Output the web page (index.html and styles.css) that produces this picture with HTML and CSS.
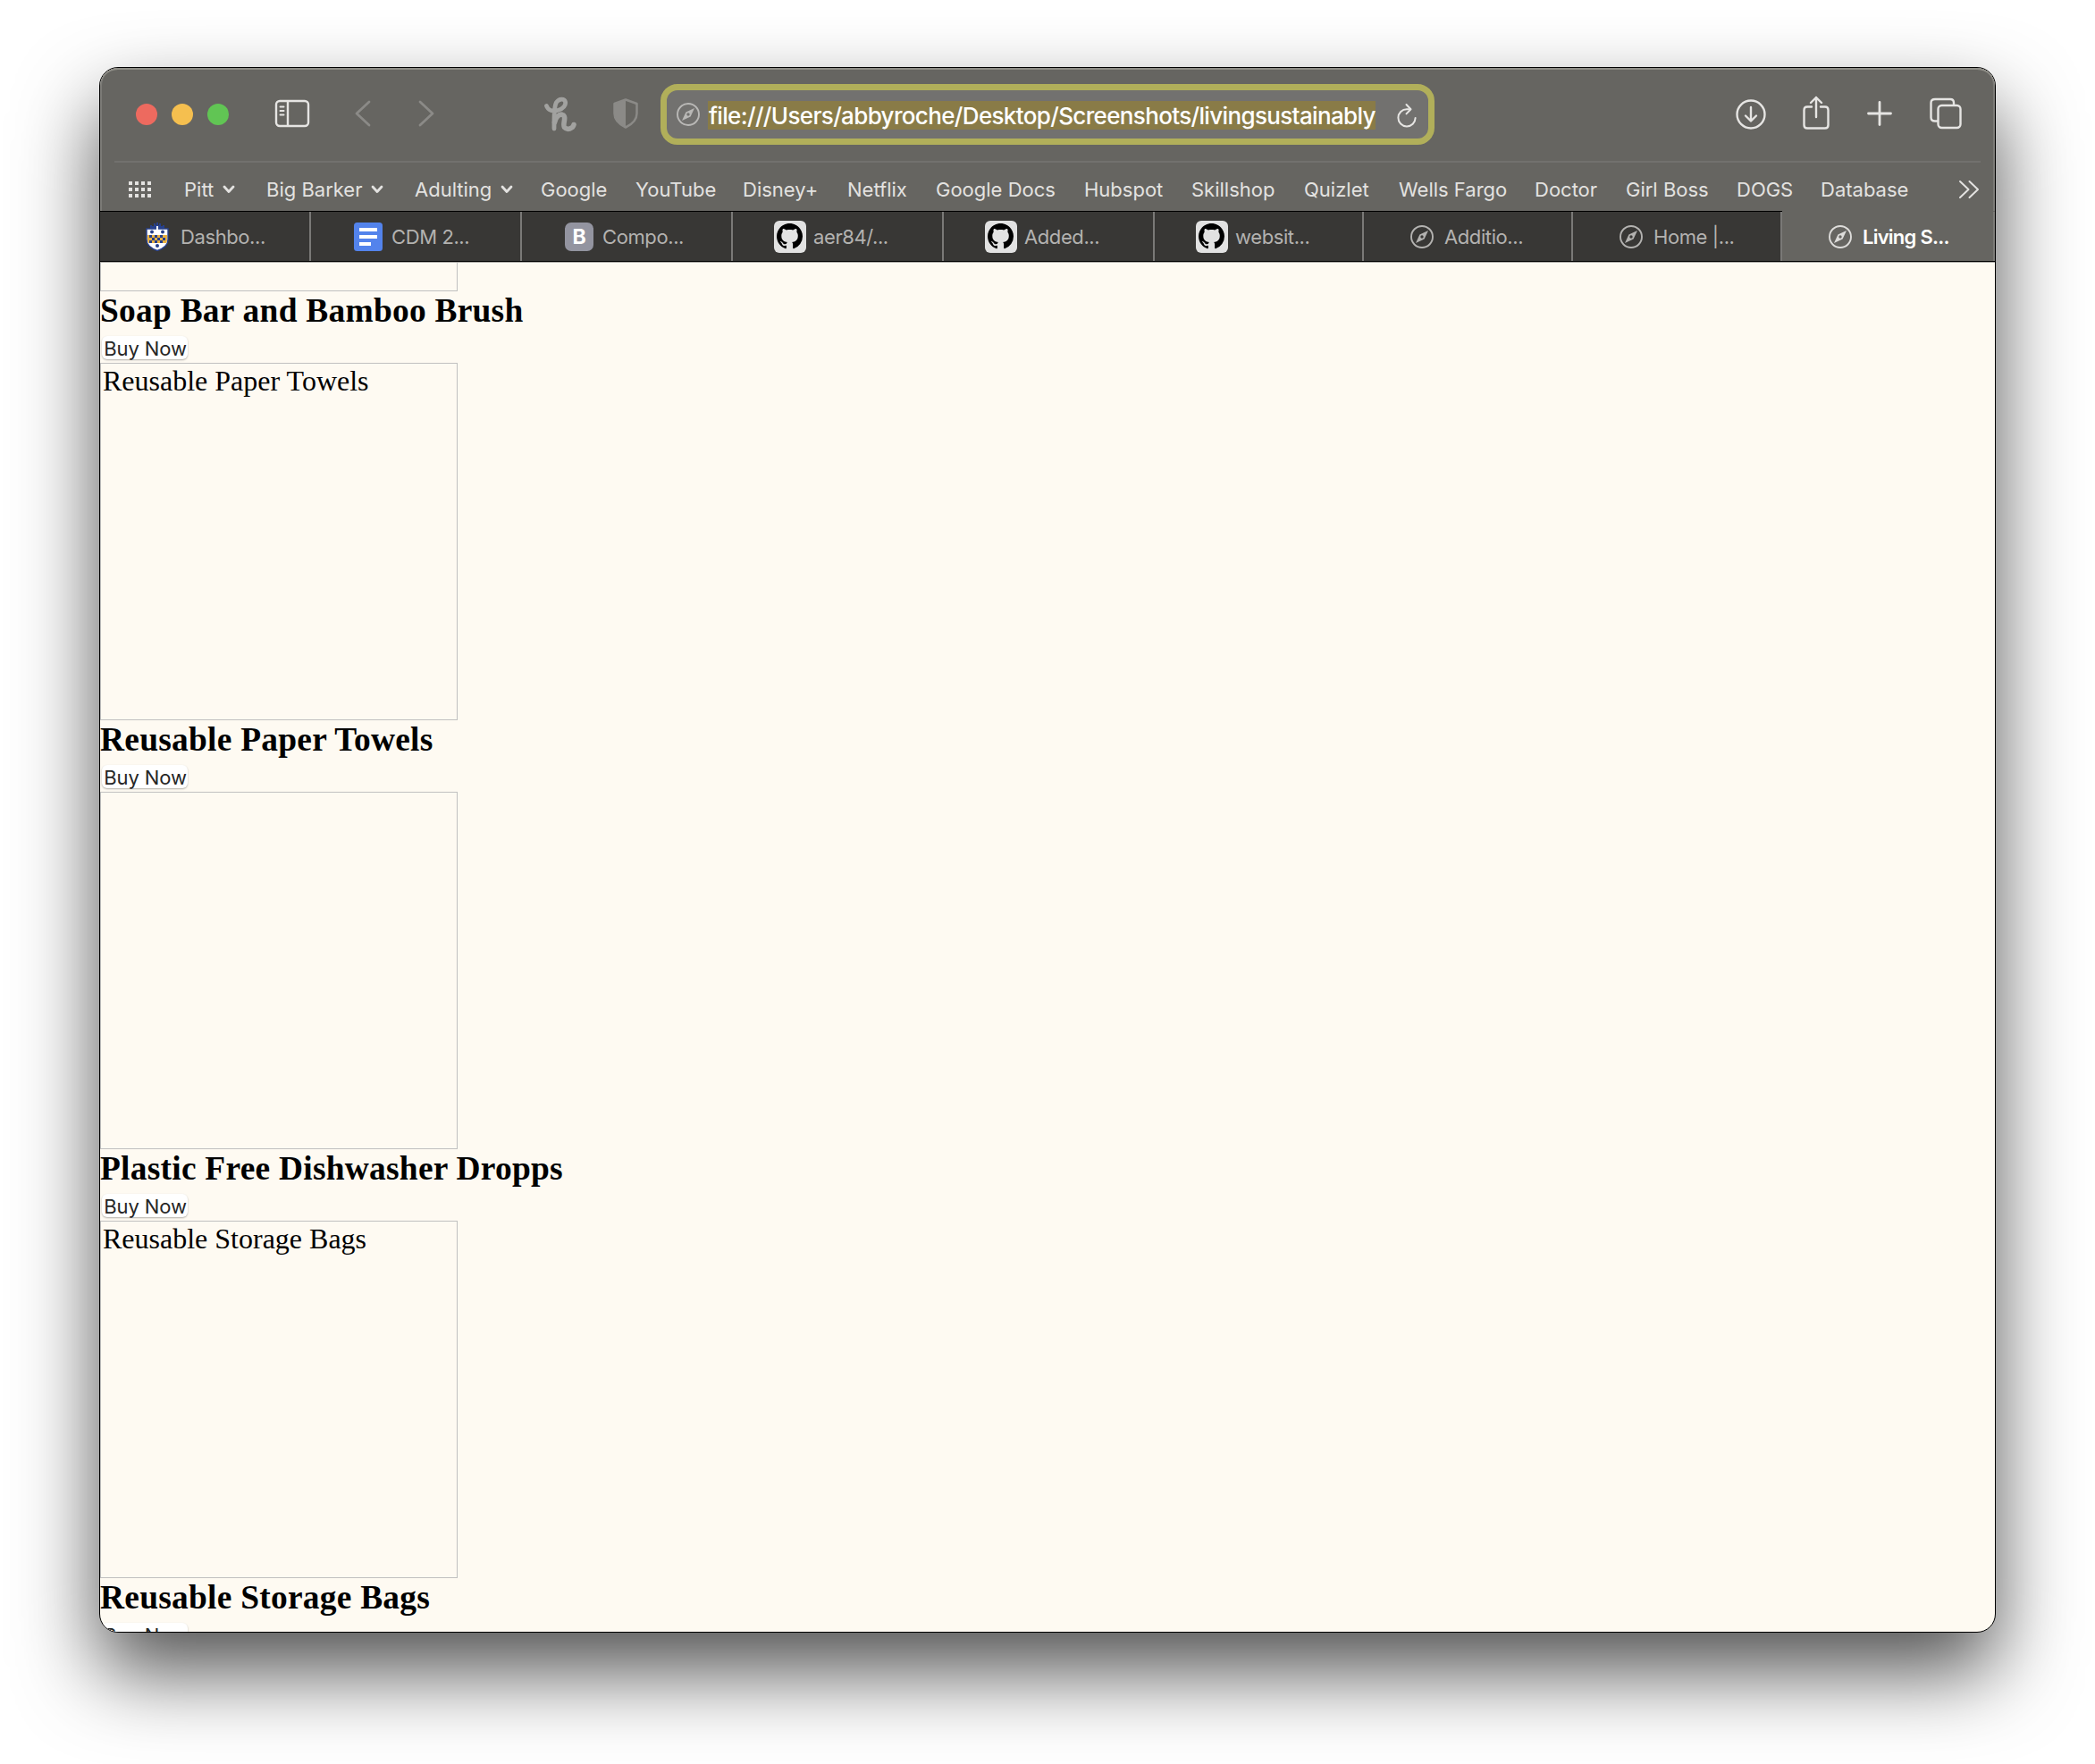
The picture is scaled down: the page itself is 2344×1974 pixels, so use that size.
FILE: index.html
```html
<!DOCTYPE html>
<html lang="en">
<head>
<meta charset="utf-8">
<title>Living Sustainably</title>
<link rel="stylesheet" href="styles.css">
</head>
<body>
<svg width="0" height="0" class="defs">
  <symbol id="compass" viewBox="0 0 26 26"><circle cx="13" cy="13" r="12" fill="none" stroke="currentColor" stroke-width="1.9"/><path fill="currentColor" fill-rule="evenodd" d="M20 6 15.6 15.4 6 20 10.4 10.6ZM13 11.3a1.7 1.7 0 1 0 0 3.4 1.7 1.7 0 0 0 0-3.4Z"/></symbol>
  <symbol id="octocat" viewBox="0 0 16 16"><path d="M8 0C3.58 0 0 3.58 0 8c0 3.54 2.29 6.53 5.47 7.59.4.07.55-.17.55-.38 0-.19-.01-.82-.01-1.49-2.01.37-2.53-.49-2.69-.94-.09-.23-.48-.94-.82-1.13-.28-.15-.68-.52-.01-.53.63-.01 1.08.58 1.23.82.72 1.21 1.87.87 2.33.66.07-.52.28-.87.51-1.07-1.78-.2-3.64-.89-3.64-3.95 0-.87.31-1.59.82-2.15-.08-.2-.36-1.02.08-2.12 0 0 .67-.21 2.2.82.64-.18 1.32-.27 2-.27s1.36.09 2 .27c1.53-1.04 2.2-.82 2.2-.82.44 1.1.16 1.92.08 2.12.51.56.82 1.27.82 2.15 0 3.07-1.87 3.75-3.65 3.95.29.25.54.73.54 1.48 0 1.07-.01 1.93-.01 2.2 0 .21.15.46.55.38A8.01 8.01 0 0 0 16 8c0-4.42-3.58-8-8-8Z"/></symbol>
  <symbol id="down" viewBox="0 0 14 10"><path d="M2 2l5 5.5L12 2" fill="none" stroke="currentColor" stroke-width="2.8" stroke-linecap="round" stroke-linejoin="round"/></symbol>
</svg>
<div class="window">
  <header class="chrome">
    <div class="toolbar">
      <span class="light red"></span><span class="light yellow"></span><span class="light green"></span>
      <svg class="i-side" width="40" height="32" viewBox="0 0 40 32" fill="none" stroke="#e6e5e3" stroke-width="2.4"><rect x="2" y="2" width="36" height="28" rx="4"/><path d="M15 2v28"/><path d="M6.5 8.5h4M6.5 13h4M6.5 17.5h4" stroke-width="2" stroke-linecap="round"/></svg>
      <svg class="i-back" width="18" height="30" viewBox="0 0 18 30" fill="none" stroke="#8b8a87" stroke-width="2.8" stroke-linecap="round" stroke-linejoin="round"><path d="M16 2 2 15l14 13"/></svg>
      <svg class="i-fwd" width="18" height="30" viewBox="0 0 18 30" fill="none" stroke="#8b8a87" stroke-width="2.8" stroke-linecap="round" stroke-linejoin="round"><path d="m2 2 14 13L2 28"/></svg>
      <svg class="i-honey" width="36" height="40" viewBox="0 0 36 40" fill="none" stroke="#a2a2a0" stroke-linecap="round" stroke-linejoin="round"><path d="M2.500 10.500C4 15 9 17 15 15.500C21 14 24.500 9.500 23.500 5.800C22.500 2 16.500 2 13.500 6.500C10.500 11.500 11 25 11 36" stroke-width="4.800"/><path d="M11.500 29C12.500 23 17 19 20.500 20.500C25.500 22.500 20 31 22.500 34.500C25.500 38 32 36 33 31.500" stroke-width="5.600"/></svg>
      <svg class="i-shield" width="28" height="34" viewBox="0 0 28 34"><path d="M14 1.500 26.500 6v11c0 7-5 12-12.500 15.500C6.500 29 1.500 24 1.500 17V6Z" fill="none" stroke="#8b8a87" stroke-width="2.500" stroke-linejoin="round"/><path d="M14 1.500V32.500C6.500 29 1.500 24 1.500 17V6Z" fill="#8b8a87"/></svg>
      <div class="address">
        <svg class="i-site" width="26" height="26"><use href="#compass"/></svg>
        <div class="url"><span>file:///Users/abbyroche/Desktop/Screenshots/livingsustainably</span></div>
        <svg class="i-reload" width="24" height="28" viewBox="0 0 24 28" fill="none" stroke="#e6e5e3" stroke-width="2" stroke-linecap="round" stroke-linejoin="round"><path d="M16 7.200H12A9.600 9.600 0 1 0 21.600 17"/><path d="M11.500 2 16.500 7.200 11.500 12.400"/></svg>
      </div>
      <svg class="i-dl" width="34" height="34" viewBox="0 0 34 34" fill="none" stroke="#e6e5e3" stroke-width="2.400" stroke-linecap="round" stroke-linejoin="round"><circle cx="17" cy="17" r="15.500"/><path d="M17 9v15M11 18.500l6 6 6-6"/></svg>
      <svg class="i-share" width="30" height="38" viewBox="0 0 30 38" fill="none" stroke="#e6e5e3" stroke-width="2.400" stroke-linecap="round" stroke-linejoin="round"><path d="M10 12.500H5Q1.500 12.500 1.500 16V33Q1.500 36.500 5 36.500H25Q28.500 36.500 28.500 33V16Q28.500 12.500 25 12.500H20M15 24V2M9 8l6-6 6 6"/></svg>
      <svg class="i-plus" width="28" height="28" viewBox="0 0 28 28" fill="none" stroke="#e6e5e3" stroke-width="2.800" stroke-linecap="round"><path d="M14 1.500v25M1.500 14h25"/></svg>
      <svg class="i-tabs" width="36" height="36" viewBox="0 0 36 36" fill="none" stroke="#e6e5e3" stroke-width="2.400" stroke-linejoin="round"><rect x="9.500" y="9" width="25" height="25" rx="4"/><path d="M9.500 26.500H6Q1.500 26.500 1.500 22.500V6Q1.500 2 6 2H23Q27 2 27 6V9"/></svg>
    </div>
    <nav class="bookmarks">
      <svg class="i-apps" width="26" height="18" viewBox="0 0 26 18" fill="#e3e2e0"><path d="M0 0h4v4H0zM7 0h4v4H7zM14 0h4v4h-4zM21 0h4v4h-4zM0 7h4v4H0zM7 7h4v4H7zM14 7h4v4h-4zM21 7h4v4h-4zM0 14h4v4H0zM7 14h4v4H7zM14 14h4v4h-4zM21 14h4v4h-4z"/></svg>
      <span class="menu">Pitt<svg width="14" height="10"><use href="#down"/></svg></span>
      <span class="menu">Big Barker<svg width="14" height="10"><use href="#down"/></svg></span>
      <span class="menu">Adulting<svg width="14" height="10"><use href="#down"/></svg></span>
      <span>Google</span><span>YouTube</span><span>Disney+</span><span>Netflix</span><span>Google Docs</span><span>Hubspot</span><span>Skillshop</span><span>Quizlet</span><span>Wells Fargo</span><span>Doctor</span><span>Girl Boss</span><span>DOGS</span><span>Database</span>
      <svg width="24" height="22" viewBox="0 0 24 22" fill="none" stroke="#e3e2e0" stroke-width="2" stroke-linecap="round" stroke-linejoin="round"><path d="m2 2 9.500 9L2 20M12.500 2l9.500 9-9.500 9"/></svg>
    </nav>
    <div class="tabs">
      <div class="tab t-pitt"><svg width="26" height="32" viewBox="0 0 26 32"><path d="M5 3h2v1h2V1h2v2h1V0h2v3h1V1h2v3h2V3h2v4H5Z" fill="#27408b"/><path d="M1 7h24v12c0 6-5 10-12 12.500C6 29 1 25 1 19Z" fill="#fff" stroke="#27408b" stroke-width="1.400"/><path d="M12 4h2v5h-2z" fill="#fff"/><path d="M2 14h22v6q-.3 1.500-1 3H3q-.8-1.500-1-3Z" fill="#e8b040"/><path d="M4 14h3v3H4zm6 0h3v3h-3zm6 0h3v3h-3zM7 17h3v3H7zm6 0h3v3h-3zm6 0h3v3h-3zM4 20h3v3H4zm6 0h3v3h-3zm6 0h3v3h-3z" fill="#27408b"/><circle cx="7" cy="10.500" r="2" fill="#27408b"/><circle cx="19" cy="10.500" r="2" fill="#27408b"/><circle cx="13" cy="26" r="2" fill="#27408b"/></svg><span>Dashbo...</span></div>
      <div class="tab t-doc"><svg width="32" height="32" viewBox="0 0 32 32"><rect width="32" height="32" rx="3.500" fill="#5383ec"/><path d="M6 6h20v4H6zM6 14h20v4H6zM6 22h13v4H6z" fill="#fff"/></svg><span>CDM 2...</span></div>
      <div class="tab t-boot"><b class="letter">B</b><span>Compo...</span></div>
      <div class="tab t-git"><i class="git"><svg width="29" height="29"><use href="#octocat"/></svg></i><span>aer84/...</span></div>
      <div class="tab t-git"><i class="git"><svg width="29" height="29"><use href="#octocat"/></svg></i><span>Added...</span></div>
      <div class="tab t-git"><i class="git"><svg width="29" height="29"><use href="#octocat"/></svg></i><span>websit...</span></div>
      <div class="tab t-site"><svg width="26" height="26"><use href="#compass"/></svg><span>Additio...</span></div>
      <div class="tab t-site"><svg width="26" height="26"><use href="#compass"/></svg><span>Home |...</span></div>
      <div class="tab t-site active"><svg width="26" height="26"><use href="#compass"/></svg><span>Living S...</span></div>
    </div>
  </header>
  <main class="page">
    <div class="photo cut"></div>
    <h3>Soap Bar and Bamboo Brush</h3>
    <button>Buy Now</button>
    <div class="photo">Reusable Paper Towels</div>
    <h3>Reusable Paper Towels</h3>
    <button>Buy Now</button>
    <div class="photo"></div>
    <h3>Plastic Free Dishwasher Dropps</h3>
    <button>Buy Now</button>
    <div class="photo">Reusable Storage Bags</div>
    <h3>Reusable Storage Bags</h3>
    <button>Buy Now</button>
  </main>
</div>
</body>
</html>
```
FILE: styles.css
```css
* { box-sizing: border-box; }
html, body { height: 100%; }
body { margin: 0; padding: 75px 0 0 111px; background: #fff; overflow: hidden; }
svg { display: block; flex: none; }
.defs { position: absolute; }
.window {
  display: flex; flex-direction: column;
  width: 2122px; height: 1752px;
  border: 1px solid #000; border-radius: 21px;
  background: #fefaf2; overflow: hidden;
  box-shadow: 0 44px 90px rgba(0, 0, 0, .68);
}
.chrome {
  flex: none; height: 218px; background: #666561;
  border-bottom: 1px solid #aaa8a3;
  box-shadow: inset 0 2px #8f8e87, inset 2px 0 #7c7b77, inset -2px 0 #7c7b77;
  border-radius: 20px 20px 0 0;
  font-family: Inter, "Liberation Sans", sans-serif;
}
.toolbar {
  display: flex; align-items: flex-start;
  height: 106px; margin: 0 16px; padding: 0 0 0 24px;
  border-bottom: 2px solid #72716e;
}
.light { width: 24px; height: 24px; margin: 40px 16px 0 0; border-radius: 50%; flex: none; }
.red { background: #ed6a5f; }
.yellow { background: #f5bf4f; }
.green { background: #61c554; }
.i-side { margin: 35px 0 0 35px; }
.i-back { margin: 36px 0 0 50px; }
.i-fwd { margin: 36px 0 0 53px; }
.i-honey { margin: 32px 0 0 123px; }
.i-shield { margin: 34px 0 0 41px; }
.address {
  display: flex; align-items: flex-start; flex: none;
  width: 866px; height: 68px; margin: 18px 0 0 25px;
  background: #72716f; border: 7px solid #b1af5a; border-radius: 19px;
}
.i-site { margin: 14px 0 0 11px; color: #b9b8b6; }
.url {
  width: 747px; height: 32px; margin: 12px 0 0 9px; padding-left: 1px; overflow: hidden;
  background: #897b47; color: #fff;
  font-size: 26px; font-weight: 500; line-height: 33px; letter-spacing: -.65px; white-space: nowrap;
}
.i-reload { margin: 14px 0 0 23px; }
.i-dl { margin: 35px 0 0 337px; }
.i-share { margin: 31px 0 0 41px; }
.i-plus { margin: 37px 0 0 42px; }
.i-tabs { margin: 33px 0 0 42px; }
.bookmarks {
  display: grid; align-items: center; height: 54px; padding: 6px 0 0 32px;
  grid-template-columns: 62px 92px 166px 141px 106px 120px 117px 99px 166px 120px 126px 106px 152px 102px 124px 94px 154px 24px;
  color: #e3e2e0; font-size: 22px; line-height: 28px; white-space: nowrap;
}
.menu { display: flex; align-items: center; gap: 10px; }
.tabs {
  display: grid; height: 57px;
  grid-template-columns: 236px 236px 236px 236px 236px 234px 234px 234px 238px;
}
.tab {
  display: flex; align-items: center;
  background: #383735; color: #b3b2b0;
  border-top: 1px solid #000; border-bottom: 1px solid #000;
  font-size: 22px; letter-spacing: -.4px; white-space: nowrap;
  box-shadow: inset -2px 0 #7a7977;
}
.t-pitt { padding-left: 51px; gap: 13px; }
.t-doc { padding-left: 48px; gap: 10px; }
.t-boot { padding-left: 48px; gap: 10px; }
.t-git { padding-left: 46px; gap: 8px; }
.t-site { padding-left: 52px; gap: 12px; }
.active { color: #dddcda; background: #666561; border-top-color: #666561; box-shadow: inset -2px 0 #7c7b77; }
.active span { color: #fff; font-weight: 600; letter-spacing: -.75px; }
.letter {
  width: 32px; height: 32px; border-radius: 7px; background: #9394a0;
  color: #fff; font-size: 23px; line-height: 32px; text-align: center;
}
.git { display: flex; width: 36px; height: 36px; padding: 3px; border-radius: 6px; background: #e2e2e2; }
.page { flex: 1; overflow: hidden; font-family: "Liberation Serif", serif; font-size: 32px; color: #000; }
.photo { width: 400px; height: 400px; border: 1px solid #c0c0c0; padding: 1px 2px; line-height: 37px; }
.photo.cut { height: 32px; border-top: 0; }
h3 { margin: 0; height: 50px; font-size: 37.44px; line-height: 44px; letter-spacing: .25px; white-space: nowrap; }
button {
  display: block; width: 96px; height: 26px; margin: 0 0 4px 2px; padding: 0 0 0 1px;
  border: 0; border-radius: 6px; background: #fff; color: #262626;
  box-shadow: 0 1px 2px rgba(0, 0, 0, .3);
  font: 22px/28px Inter, "Liberation Sans", sans-serif; letter-spacing: -.1px; white-space: nowrap;
}
```
